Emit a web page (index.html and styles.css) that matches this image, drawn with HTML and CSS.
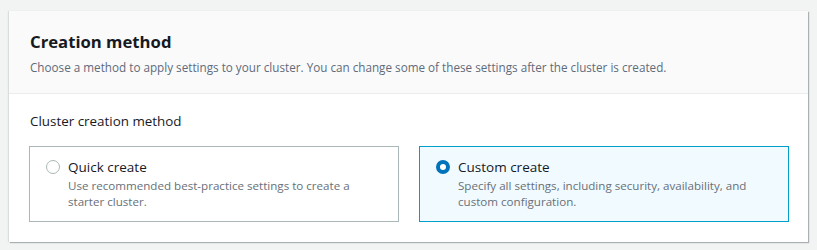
FILE: index.html
```html
<!DOCTYPE html>
<html lang="en">
<head>
  <meta charset="UTF-8">
  <title>Creation method</title>
  <link rel="stylesheet" href="styles.css">
</head>
<body>

  <div class="panel">
    <div class="panel-header">
      <h2>Creation method</h2>
      <p>Choose a method to apply settings to your cluster. You can change some of these settings after the cluster is created.</p>
    </div>

    <div class="panel-body">
      <div class="field-label">Cluster creation method</div>
      <div class="tiles">
        <label class="tile">
          <span class="radio"></span>
          <span class="tile-text">
            <span class="tile-title">Quick create</span>
            <span class="tile-desc">Use recommended best-practice settings to create a starter cluster.</span>
          </span>
        </label>
        <label class="tile selected">
          <span class="radio"></span>
          <span class="tile-text">
            <span class="tile-title">Custom create</span>
            <span class="tile-desc">Specify all settings, including security, availability, and custom configuration.</span>
          </span>
        </label>
      </div>
    </div>
  </div>

</body>
</html>
```

FILE: styles.css
```css
body {
  font-family: "Open Sans", Arial, sans-serif;
  margin: 0;
  padding: 11px 9px 9px 9px;
  background-color: #f2f3f3;
  color: #16191f;
}
.panel {
  background-color: white;
  box-shadow: 1px 1px 1px rgba(0, 28, 36, 0.3), -1px 0 1px rgba(0, 28, 36, 0.1);
}
.panel-header {
  background-color: #fafafa;
  border-bottom: 1px solid #eaeded;
  padding: 18px 21px 17px;
}
.panel-header h2 {
  margin: 0;
  font-size: 16.7px;
  font-weight: 700;
  line-height: 26px;
}
.panel-header p {
  margin: 3px 0 0;
  font-size: 11.7px;
  line-height: 18px;
  color: #5f6b7a;
}
.panel-body {
  padding: 17px 19px 20px 20px;
}
.field-label {
  font-size: 13.4px;
  line-height: 20px;
  margin-left: 1px;
  margin-bottom: 15px;
}
.tiles {
  display: grid;
  grid-template-columns: 1fr 1fr;
  gap: 20px;
}
.tile {
  display: flex;
  gap: 8px;
  border: 1px solid #aab7b8;
  padding: 9px 16px 10px;
  height: 76px;
  box-sizing: border-box;
}
.tile.selected {
  border-color: #00a1c9;
  background-color: #f1faff;
}
.radio {
  flex: none;
  width: 14px;
  height: 14px;
  margin-top: 4px;
  border: 1px solid #aab7b8;
  border-radius: 50%;
  background-color: white;
  box-sizing: border-box;
}
.selected .radio {
  border: 4px solid #0073bb;
}
.tile-text {
  display: flex;
  flex-direction: column;
}
.tile-title {
  font-size: 13.5px;
  line-height: 22px;
}
.tile-desc {
  font-size: 11.6px;
  line-height: 16px;
  color: #687078;
}
```
